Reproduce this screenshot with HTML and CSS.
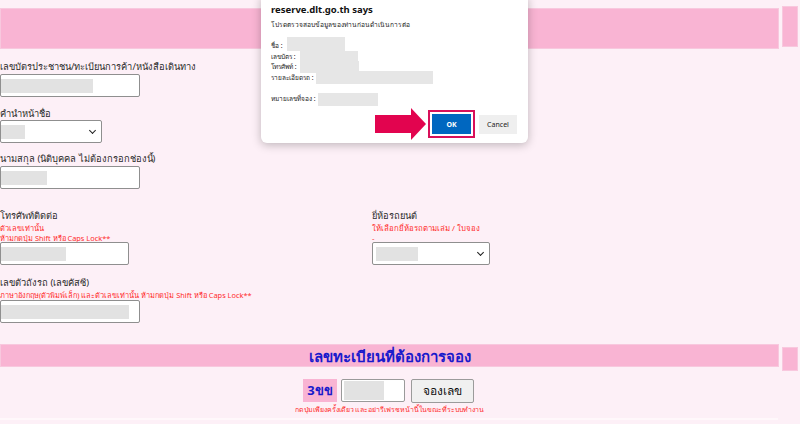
FILE: index.html
```html
<!DOCTYPE html>
<html lang="th">
<head>
<meta charset="utf-8">
<link rel="stylesheet" href="styles.css">
</head>
<body>
<div class="page">
  <div class="bandrow top">
    <div class="band"></div>
    <div class="side"></div>
  </div>

  <div class="form">
    <div class="field f1">
      <div class="label">เลขบัตรประชาชน/ทะเบียนการค้า/หนังสือเดินทาง</div>
      <div class="input w140"><span class="fill w92"></span></div>
    </div>
    <div class="field f2">
      <div class="label">คำนำหน้าชื่อ</div>
      <div class="select w102"><span class="fill w24"></span><span class="chev"></span></div>
    </div>
    <div class="field f3">
      <div class="label">นามสกุล (นิติบุคคล ไม่ต้องกรอกช่องนี้)</div>
      <div class="input w140"><span class="fill w46"></span></div>
    </div>
    <div class="cols">
      <div class="field f4">
        <div class="label">โทรศัพท์ติดต่อ</div>
        <div class="note">ตัวเลขเท่านั้น</div>
        <div class="note">ห้ามกดปุ่ม Shift หรือ Caps Lock**</div>
        <div class="input w129"><span class="fill w65"></span></div>
      </div>
      <div class="field f4r">
        <div class="label">ยี่ห้อรถยนต์</div>
        <div class="note">ให้เลือกยี่ห้อรถตามเล่ม / ใบจอง</div>
        <div class="note dash">-</div>
        <div class="select w117"><span class="fill w42"></span><span class="chev"></span></div>
      </div>
    </div>
    <div class="field f5">
      <div class="label">เลขตัวถังรถ (เลขคัสซี)</div>
      <div class="note">ภาษาอังกฤษ(ตัวพิมพ์เล็ก) และตัวเลขเท่านั้น ห้ามกดปุ่ม Shift หรือ Caps Lock**</div>
      <div class="input w140"><span class="fill w128"></span></div>
    </div>
  </div>

  <div class="bandrow mid">
    <div class="band"><h2>เลขทะเบียนที่ต้องการจอง</h2></div>
    <div class="side"></div>
  </div>

  <div class="reserve">
    <div class="plate-row">
      <span class="prefix">3ขข</span>
      <span class="pinput"><span class="fill"></span></span>
      <span class="rbtn">จองเลข</span>
    </div>
    <div class="warn">กดปุ่มเพียงครั้งเดียว และอย่ารีเฟรชหน้านี้ในขณะที่ระบบทำงาน</div>
  </div>
  <div class="footline"></div>

  <div class="dialog">
    <div class="dtitle">reserve.dlt.go.th says</div>
    <div class="dmsg">โปรดตรวจสอบข้อมูลของท่านก่อนดำเนินการต่อ</div>
    <div class="dlines">
      <div class="dl"><span>ชื่อ :</span><span class="blk b1"></span></div>
      <div class="dl"><span>เลขบัตร :</span><span class="blk b2"></span></div>
      <div class="dl"><span>โทรศัพท์ :</span><span class="blk b3"></span></div>
      <div class="dl"><span>รายละเอียดรถ :</span><span class="blk b4"></span></div>
    </div>
    <div class="dl dnum"><span>หมายเลขที่จอง :</span><span class="blk b5"></span></div>
    <div class="dbtns">
      <svg class="arrow" width="52" height="32" viewBox="0 0 52 32"><path d="M0 7 H36 V0 L51 16 L36 32 V25 H0 Z" fill="#e2044f"/></svg>
      <span class="okwrap"><span class="ok">OK</span></span>
      <span class="cancel">Cancel</span>
    </div>
  </div>
</div>
</body>
</html>
```

FILE: styles.css
```css
* { box-sizing: border-box; }
html, body { margin: 0; padding: 0; }
body {
  background: #fdf0f7;
  font-family: "Noto Sans", "DejaVu Sans", sans-serif;
  width: 800px;
  height: 424px;
  overflow: hidden;
}
.page { position: relative; width: 800px; height: 424px; }

.bandrow { display: flex; gap: 3px; }
.bandrow.top { padding-top: 8px; height: 49px; }
.bandrow.top .band { height: 41px; }
.bandrow.top .side { height: 41px; margin-top: -2px; }
.band {
  width: 779px;
  background: #f9b4d3;
  border: 1px solid #f8c8de;
  display: flex; align-items: center; justify-content: center;
}
.side {
  width: 16px;
  background: #f9b4d3;
  border: 1px solid #f8c8de;
}

.form { padding-left: 0; }
.label { font-size: 9.3px; line-height: 14px; color: #2b2b2b; height: 14px; white-space: nowrap; }
.note { font-size: 7.4px; line-height: 10px; height: 10px; color: #ff2b2b; white-space: nowrap; }
.f1 { margin-top: 11px; }
.input, .select {
  position: relative;
  height: 23px;
  background: #fff;
  border: 1px solid #8f8f8f;
  border-radius: 2px;
  display: flex; align-items: center;
}
.fill { display: block; height: 14px; background: #e2e2e2; }
.w140 { width: 140px; } .w102 { width: 102px; } .w129 { width: 129px; } .w117 { width: 118px; }
.w92 { width: 92px; } .w24 { width: 24px; } .w46 { width: 46px; } .w65 { width: 65px; }
.w42 { width: 42px; margin-left: 3px; } .w128 { width: 128px; }
.chev {
  position: absolute; right: 6px; top: 7px;
  width: 5px; height: 5px;
  border-right: 1.5px solid #222; border-bottom: 1.5px solid #222;
  transform: rotate(45deg);
}
.f1 .input { margin-top: 0; }
.f2 { margin-top: 10px; }
.f2 .select { margin-top: -1px; }
.f3 { margin-top: 9px; }
.cols { display: grid; grid-template-columns: 372px 200px; margin-top: 20px; }
.f4 .input { margin-top: -1px; }
.f4r .note { margin-top: 1px; font-size: 7.8px; height: 9px; line-height: 9px; }
.f4r .dash { margin-top: 1px; height: 8px; line-height: 8px; }
.f4r .select { margin-top: 0; }
.f5 { margin-top: 11px; }

.bandrow.mid { margin-top: 21px; height: 27px; }
.bandrow.mid .band { height: 23px; }
.bandrow.mid .side { height: 24px; margin-top: 3px; }
h2 { margin: 0; font-size: 15px; font-weight: bold; color: #1a1acc; line-height: 20px; }

.reserve { width: 779px; display: flex; flex-direction: column; align-items: center; margin-top: 7px; }
.plate-row { display: flex; align-items: center; gap: 4px; height: 25px; margin-left: -2px; }
.prefix {
  background: #f9b4d3; color: #1a1acc; font-weight: bold; font-size: 13px;
  height: 23px; width: 34px; display: flex; align-items: center; justify-content: center;
}
.pinput {
  width: 64px; height: 23px; background: #fff; border: 1px solid #9a9a9a; border-radius: 2px;
  display: flex; align-items: center; padding: 0 2px;
}
.pinput .fill { width: 40px; height: 19px; }
.rbtn {
  margin-left: 2px;
  width: 63px; height: 24px; background: #f0f0f0; border: 1px solid #9b9b9b; border-radius: 2px;
  font-size: 12px; color: #111; display: flex; align-items: center; justify-content: center;
}
.warn { font-size: 7px; line-height: 10px; color: #ff2b2b; margin-top: 2px; white-space: nowrap; }
.footline { position: absolute; left: 0; top: 418px; width: 778px; height: 2px; background: #fff8fb; }

.dialog {
  position: absolute; left: 261px; top: -6px;
  width: 267px; height: 149px;
  background: #fff;
  border-radius: 6px;
  box-shadow: 0 2px 10px rgba(0,0,0,0.25);
  padding: 10px 10px 0 10px;
  color: #222;
}
.dtitle { font-size: 9.5px; font-weight: bold; line-height: 12px; color: #111; }
.dmsg { font-size: 6.6px; line-height: 10px; margin-top: 4px; }
.dlines { margin-top: 11px; }
.dl { display: flex; align-items: center; font-size: 6.5px; line-height: 10.5px; height: 10.5px; }
.dl > span:first-child { white-space: nowrap; }
.blk { display: block; background: #e6e6e6; }
.b1 { width: 58px; height: 14px; margin-left: 5px; margin-top: -4px; }
.b2 { width: 58px; height: 12px; margin-left: 5px; }
.b3 { width: 59px; height: 12px; margin-left: 4px; }
.b4 { width: 117px; height: 13px; margin-left: 3px; }
.dnum { margin-top: 10px; height: 13px; }
.b5 { width: 60px; height: 13px; margin-left: 3px; }
.dbtns { display: flex; align-items: center; justify-content: flex-end; margin-top: 2px; gap: 3px; padding-right: 1px; }
.arrow { margin-right: -2px; }
.okwrap { border: 2px solid #d8105a; padding: 2px; }
.ok {
  display: flex; width: 39px; height: 20px; background: #0067c0; color: #fff;
  font-size: 7px; font-weight: bold; align-items: center; justify-content: center;
}
.cancel {
  display: flex; width: 38px; height: 19px; background: #efefef; color: #222;
  font-size: 7px; align-items: center; justify-content: center; margin-left: 1px;
}
```
